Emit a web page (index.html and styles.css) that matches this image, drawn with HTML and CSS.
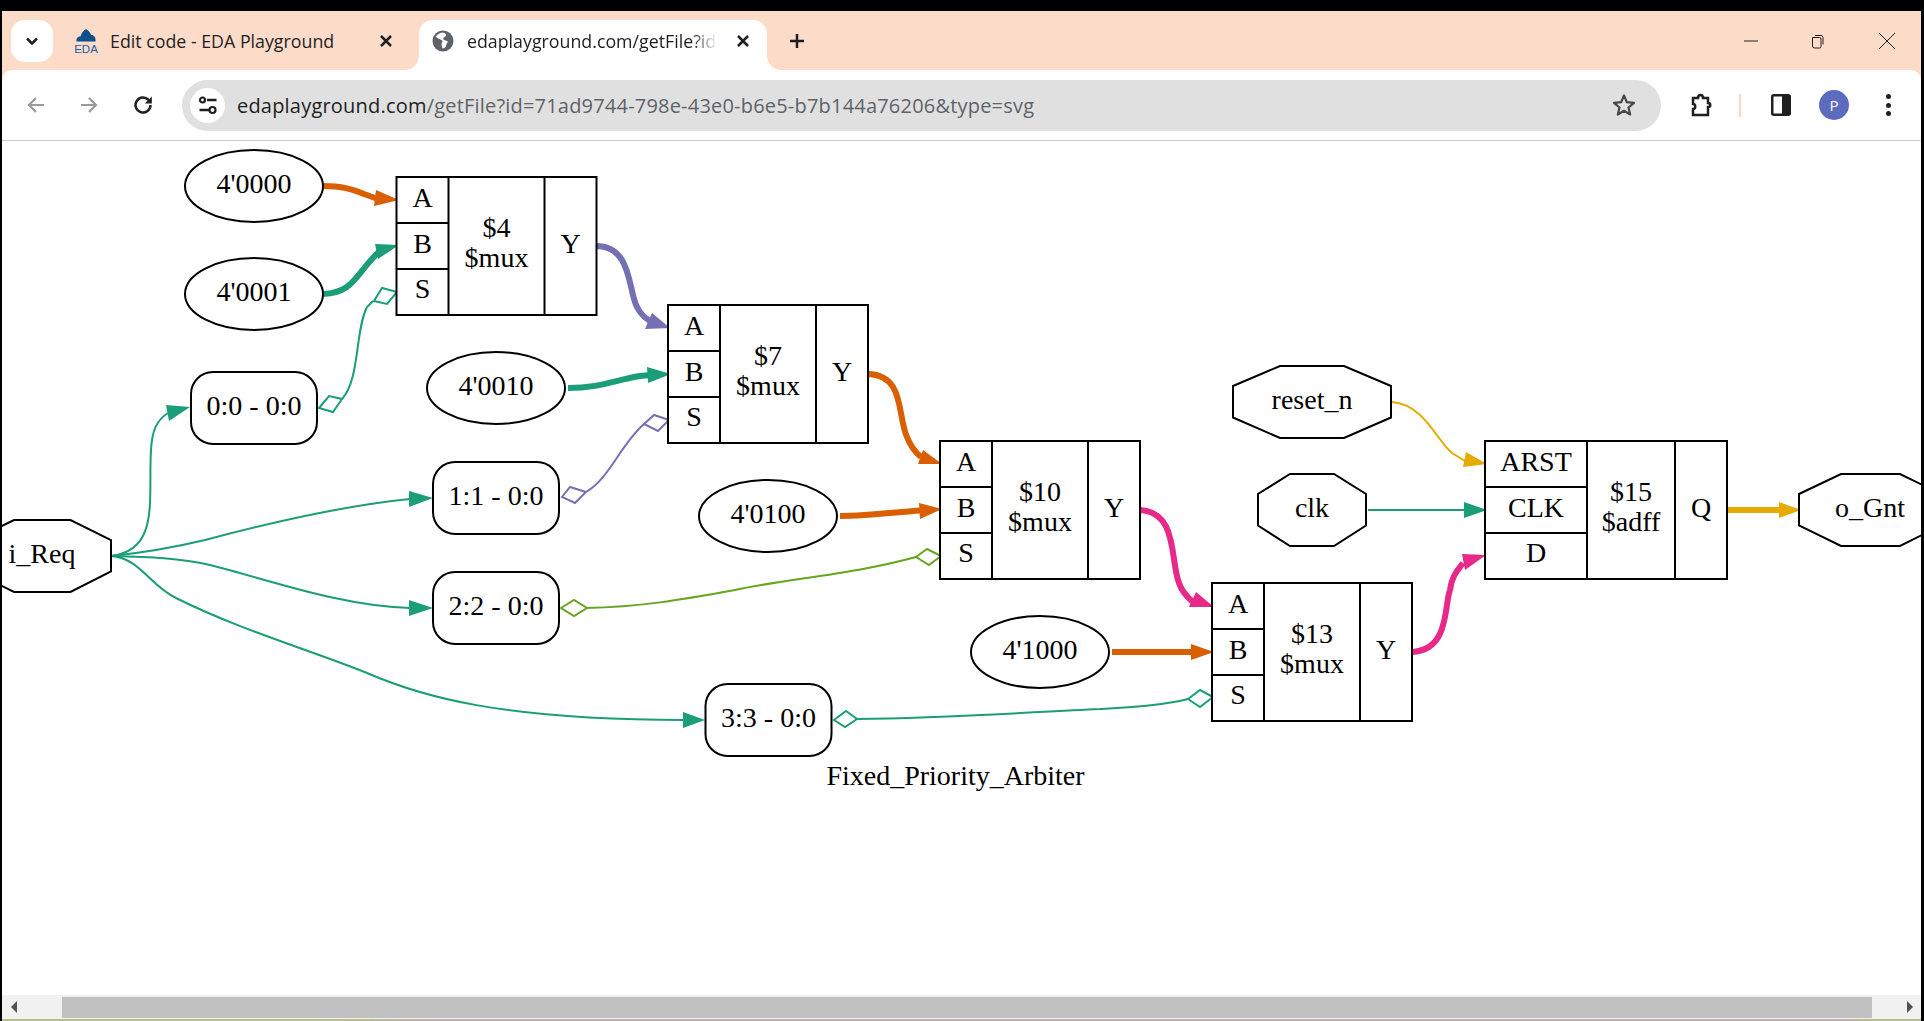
FILE: index.html
```html
<!DOCTYPE html>
<html lang="en">
<head>
<meta charset="utf-8">
<title>edaplayground.com/getFile</title>
<link rel="stylesheet" href="styles.css">
</head>
<body>
<div class="window">
  <div class="tabstrip">
    <button class="tab-search"><svg class="ico" width="16" height="16" viewBox="0 0 16 16"><path class="s-dark" d="M3 5.500 8 10.500 13 5.500"/></svg></button>
    <div class="tab tab-idle">
      <svg class="favicon" width="26" height="26" viewBox="0 0 26 26"><path class="f-blue" d="M3.500 13.500C3 10 5 8.500 7.500 8.500 8.500 5 10.500 2.500 13 1c2.500 1.500 4.500 3.500 5 6 3-.2 5 2.500 4.500 6.500z"/><text class="eda" x="13" y="24.500">EDA</text></svg>
      <span class="tab-title">Edit code - EDA Playground</span>
      <svg class="tab-x" width="14" height="14" viewBox="0 0 14 14"><path class="s-dark" d="M2 2 12 12M12 2 2 12"/></svg>
    </div>
    <div class="tab tab-active">
      <svg class="globe" width="22" height="22" viewBox="0 0 22 22"><circle class="f-grey" cx="11" cy="11" r="10.500"/><path class="f-white" d="M10 2.500c-2 .5-5 2-6 4 1 2 3 2.500 4.500 3 1 .5 2 .5 2 2 0 1-1 1.500-1 3l1 4c1.500 0 3-1 3.500-2.500 0-2 1.500-3 2-4.500-1.500-1-3.500-1-4.500-2-.5-1-.5-1.500 1-2.500 1-.5 2-1.500 1.500-3-1-.5-2.500-1.500-4-1.500z"/></svg>
      <span class="tab-title tab-fade">edaplayground.com/getFile?id</span>
      <svg class="tab-x" width="14" height="14" viewBox="0 0 14 14"><path class="s-dark" d="M2 2 12 12M12 2 2 12"/></svg>
    </div>
    <svg class="newtab" width="18" height="18" viewBox="0 0 18 18"><path class="s-dark" d="M9 2V16M2 9H16"/></svg>
    <div class="winctl">
      <svg class="win-min" width="16" height="16" viewBox="0 0 16 16"><path class="s-thin" d="M1 8H15"/></svg>
      <svg width="16" height="16" viewBox="0 0 16 16"><path class="s-thin" d="M3.500 4.500h7a1.500 1.500 0 0 1 1.500 1.500v7.500a1.500 1.500 0 0 1-1.500 1.500h-5a2 2 0 0 1-2-2zM6 2.500h6a2 2 0 0 1 2 2v7"/></svg>
      <svg width="18" height="18" viewBox="0 0 18 18"><path class="s-thin" d="M1 1 17 17M17 1 1 17"/></svg>
    </div>
  </div>
  <div class="toolbar">
    <svg class="nav" width="20" height="20" viewBox="0 0 20 20"><path class="s-muted" d="M18 10H3M10 3 3 10 10 17"/></svg>
    <svg class="nav" width="20" height="20" viewBox="0 0 20 20"><path class="s-muted" d="M2 10H17M10 3 17 10 10 17"/></svg>
    <svg class="nav" width="22" height="22" viewBox="0 0 22 22"><path class="s-dark" d="M18.500 11a7.500 7.500 0 1 1-2.200-5.300L18.500 8"/><path class="f-dark" d="M19.800 2.500v7h-7z"/></svg>
    <div class="omnibox">
      <span class="site-btn"><svg width="20" height="20" viewBox="0 0 20 20"><path class="s-dark" d="M12.500 15H1.500M9 5H18.500"/><circle class="ring" cx="14.500" cy="15" r="3"/><circle class="ring" cx="4.500" cy="5" r="2.500"/></svg></span>
      <span class="url"><span class="url-host">edaplayground.com</span>/getFile?id=71ad9744-798e-43e0-b6e5-b7b144a76206&amp;type=svg</span>
      <svg class="star" width="24" height="24" viewBox="0 0 24 24"><path class="s-star" d="M12 2.500 14.800 9.200 22 9.800 16.500 14.500 18.200 21.500 12 17.800 5.800 21.500 7.500 14.500 2 9.800 9.200 9.200z"/></svg>
    </div>
    <svg class="ext" width="26" height="26" viewBox="0 0 26 26"><path class="s-dark" d="M5 6h5c0-4 5-4 5 0h5v5c3 0 3 4 0 4v8H5v-6c3 0 3-5 0-5z"/></svg>
    <span class="tb-sep"></span>
    <svg class="panel" width="20" height="22" viewBox="0 0 20 22"><rect class="s-dark" x="1.250" y="1.250" width="17.500" height="19.500" rx="1.500"/><rect class="f-dark" x="11" y="1" width="8" height="20"/></svg>
    <span class="avatar">P</span>
    <span class="menu"><i></i><i></i><i></i></span>
  </div>
  <div class="page">
    <svg class="graph" width="1919" height="854" viewBox="2 141 1919 854">
      <!-- edges -->
      <g class="edge w orange">
        <path d="M323,186 C342,186 352,189 364,194 L378,199"/><polygon points="399,200 374,206 376,190"/>
      </g>
      <g class="edge w green">
        <path d="M323,294 C355,293 356,272 380,251"/><polygon points="399,245 378,259 375,244"/>
        <path d="M568,388 C600,388 615,380 640,376 L650,375"/><polygon points="671,374 648,383 647,367"/>
      </g>
      <g class="edge w purple">
        <path d="M596,246 C632,246 628,290 637,307 C640,313 645,318 650,321"/><polygon points="670,328 645,329 652,313"/>
      </g>
      <g class="edge w orange">
        <path d="M868,374 C905,375 897,415 907,437 C910,445 915,452 921,457"/><polygon points="942,464 918,464 923,450"/>
        <path d="M840,516 C865,516 890,513 920,510.500"/><polygon points="942,509 920,519 919,503"/>
        <path d="M1112,652 H1192"/><polygon points="1214,652 1191,660 1191,644"/>
      </g>
      <g class="edge w pink">
        <path d="M1140,510 C1178,512 1170,560 1179,583 C1182,592 1188,598 1194,603"/><polygon points="1214,607 1189,607 1196,592"/>
        <path d="M1412,652 C1450,650 1444,605 1450,590 C1452,575 1458,570 1463,563"/><polygon points="1486,555 1465,570 1462,554"/>
      </g>
      <g class="edge w amber">
        <path d="M1728,510 H1780"/><polygon points="1801,510 1779,518 1779,502"/>
      </g>
      <g class="edge t green">
        <path d="M111,556 C160,550 148,500 151,450 C152,430 157,420 168,413"/><polygon points="190,407 169,421 166,405"/>
        <path d="M111,556 C150,552 180,546 205,540 C280,520 350,505 410,499"/><polygon points="433,498 409,507 409,491"/>
        <path d="M111,556 C150,557 180,558 210,565 C270,580 340,606 410,608"/><polygon points="433,608 409,616 409,600"/>
        <path d="M111,556 C140,558 150,586 176,598 C240,630 310,650 367,673 C420,696 500,720 684,720"/><polygon points="705,720 683,728 683,712"/>
        <path d="M1368,510 H1465"/><polygon points="1487,510 1464,518 1464,502"/>
        <path d="M342,399 C360,380 355,330 367,307 L373,301"/><polygon class="open" points="319,408 329,396 342,399 333,412"/><polygon class="open" points="374,301 382,288 397,292 387,304"/>
        <path d="M857,719 C950,718 1030,712 1100,709 C1130,707 1160,706 1188,699"/><polygon class="open" points="834,720 846,711 857,719 845,727"/><polygon class="open" points="1188,699 1200,690 1213,697 1200,707"/>
      </g>
      <g class="edge t purple">
        <path d="M586,492 C610,478 620,445 644,424"/><polygon class="open" points="562,497 570,487 586,492 575,503"/><polygon class="open" points="644,424 654,415 669,420 658,431"/>
      </g>
      <g class="edge t lime">
        <path d="M586,608 C640,607 680,600 735,590 C790,578 850,575 916,557"/><polygon class="open" points="561,608 574,600 587,608 574,616"/><polygon class="open" points="916,557 927,549 941,556 929,565"/>
      </g>
      <g class="edge t amber">
        <path d="M1392,402 C1425,405 1436,440 1452,453 L1465,461"/><polygon points="1487,464 1463,467 1466,452"/>
      </g>

      <!-- constants -->
      <g transform="translate(254 186)"><ellipse class="shape" rx="69" ry="36"/><text class="lbl" y="7">4'0000</text></g>
      <g transform="translate(254 294)"><ellipse class="shape" rx="69" ry="36"/><text class="lbl" y="7">4'0001</text></g>
      <g transform="translate(496 388)"><ellipse class="shape" rx="69" ry="36"/><text class="lbl" y="6.500">4'0010</text></g>
      <g transform="translate(768 516)"><ellipse class="shape" rx="69" ry="36"/><text class="lbl" y="6.500">4'0100</text></g>
      <g transform="translate(1040 652)"><ellipse class="shape" rx="69" ry="36"/><text class="lbl" y="6.500">4'1000</text></g>

      <!-- bit slices -->
      <g transform="translate(254 408)"><rect class="shape" x="-63" y="-36" width="126" height="72" rx="22"/><text class="lbl" y="6.500">0:0 - 0:0</text></g>
      <g transform="translate(496 498)"><rect class="shape" x="-63" y="-36" width="126" height="72" rx="22"/><text class="lbl" y="6.500">1:1 - 0:0</text></g>
      <g transform="translate(496 608)"><rect class="shape" x="-63" y="-36" width="126" height="72" rx="22"/><text class="lbl" y="6.500">2:2 - 0:0</text></g>
      <g transform="translate(768.500 720)"><rect class="shape" x="-63" y="-36" width="126" height="72" rx="22"/><text class="lbl" y="6.500">3:3 - 0:0</text></g>

      <!-- ports -->
      <g transform="translate(42 556)"><polygon class="shape" points="69,-16 69,15.500 28.500,36 -28,36 -69,15.500 -69,-16 -28,-36 28.500,-36"/><text class="lbl" y="6.500">i_Req</text></g>
      <g transform="translate(1312 402)"><polygon class="shape" points="79,-16 79,15.500 32,36 -32,36 -79,15.500 -79,-16 -32,-36 32,-36"/><text class="lbl" y="6.500">reset_n</text></g>
      <g transform="translate(1312 510)"><polygon class="shape" points="54,-16 54,15.500 22,36 -22,36 -54,15.500 -54,-16 -22,-36 22,-36"/><text class="lbl" y="6.500">clk</text></g>
      <g transform="translate(1870 510)"><polygon class="shape" points="71,-16 71,15.500 30,36 -29,36 -71,15.500 -71,-16 -29,-36 30,-36"/><text class="lbl" y="6.500">o_Gnt</text></g>

      <!-- muxes -->
      <g transform="translate(396.500 177)">
        <rect class="shape" width="200" height="138"/><path class="shape" d="M52,0V138M148,0V138M0,46H52M0,92H52"/>
        <text class="lbl" x="26" y="30">A</text><text class="lbl" x="26" y="76">B</text><text class="lbl" x="26" y="121">S</text>
        <text class="lbl" x="100" y="60">$4</text><text class="lbl" x="100" y="90">$mux</text><text class="lbl" x="174" y="76">Y</text>
      </g>
      <g transform="translate(668 305)">
        <rect class="shape" width="200" height="138"/><path class="shape" d="M52,0V138M148,0V138M0,46H52M0,92H52"/>
        <text class="lbl" x="26" y="30">A</text><text class="lbl" x="26" y="76">B</text><text class="lbl" x="26" y="121">S</text>
        <text class="lbl" x="100" y="60">$7</text><text class="lbl" x="100" y="90">$mux</text><text class="lbl" x="174" y="76">Y</text>
      </g>
      <g transform="translate(940 441)">
        <rect class="shape" width="200" height="138"/><path class="shape" d="M52,0V138M148,0V138M0,46H52M0,92H52"/>
        <text class="lbl" x="26" y="30">A</text><text class="lbl" x="26" y="76">B</text><text class="lbl" x="26" y="121">S</text>
        <text class="lbl" x="100" y="60">$10</text><text class="lbl" x="100" y="90">$mux</text><text class="lbl" x="174" y="76">Y</text>
      </g>
      <g transform="translate(1212 583)">
        <rect class="shape" width="200" height="138"/><path class="shape" d="M52,0V138M148,0V138M0,46H52M0,92H52"/>
        <text class="lbl" x="26" y="30">A</text><text class="lbl" x="26" y="76">B</text><text class="lbl" x="26" y="121">S</text>
        <text class="lbl" x="100" y="60">$13</text><text class="lbl" x="100" y="90">$mux</text><text class="lbl" x="174" y="76">Y</text>
      </g>
      <g transform="translate(1485 441)">
        <rect class="shape" width="242" height="138"/><path class="shape" d="M102,0V138M190,0V138M0,46H102M0,92H102"/>
        <text class="lbl" x="51" y="30">ARST</text><text class="lbl" x="51" y="76">CLK</text><text class="lbl" x="51" y="121">D</text>
        <text class="lbl" x="146" y="60">$15</text><text class="lbl" x="146" y="90">$adff</text><text class="lbl" x="216" y="76">Q</text>
      </g>

      <text class="lbl" x="955.500" y="785">Fixed_Priority_Arbiter</text>
    </svg>
  </div>
  <div class="hscroll">
    <span class="arrow arrow-l"></span>
    <span class="thumb"></span>
    <span class="arrow arrow-r"></span>
  </div>
  <div class="wallpaper"></div>
</div>
</body>
</html>
```
FILE: styles.css
```css
* { box-sizing: border-box; }
html, body { margin: 0; padding: 0; height: 100%; background: #000; overflow: hidden; }
body { padding: 11px 3px 0 2px; }
.window { height: 1010px; display: flex; flex-direction: column; background: #fddbc9; font-family: "Open Sans", "Noto Sans", sans-serif; color: #1f1f1f; }

/* shared icon strokes */
svg { display: block; flex: none; }
.s-dark { fill: none; stroke: #1f1f1f; stroke-width: 2.5; }
.s-muted { fill: none; stroke: #9a9a9a; stroke-width: 2.2; }
.s-thin { fill: none; stroke: #1f1f1f; stroke-width: 1; }
.s-star { fill: none; stroke: #474747; stroke-width: 2.2; stroke-linejoin: round; }
.f-dark { fill: #1f1f1f; }
.f-grey { fill: #5f6368; }
.f-white { fill: #fff; }
.f-blue { fill: #0b4f8f; }
.ring { fill: #fff; stroke: #1f1f1f; stroke-width: 2.2; }
.eda { font: 11.500px "Liberation Sans", sans-serif; fill: #1b5ea6; text-anchor: middle; }

/* tab strip */
.tabstrip { height: 59px; flex: none; display: flex; align-items: flex-start; padding: 9px 0 0 9px; }
.tab-search { width: 42px; height: 42px; border: 0; border-radius: 14px; background: #fff; display: flex; align-items: center; justify-content: center; padding: 0; }
.tab { height: 50px; display: flex; align-items: center; position: relative; }
.tab-idle { width: 366px; padding: 0 0 8px 20px; }
.favicon { margin-right: 11px; }
.tab-title { font-size: 17.800px; white-space: nowrap; overflow: hidden; }
.tab-idle .tab-title { width: 269px; }
.tab-active { width: 348px; padding: 0 0 8px 13px; background: #fff; border-radius: 14px 14px 0 0; }
.tab-active::before, .tab-active::after { content: ""; position: absolute; bottom: 0; width: 14px; height: 14px; }
.tab-active::before { left: -14px; background: radial-gradient(circle at 0 0, transparent 13.500px, #fff 14px); }
.tab-active::after { right: -14px; background: radial-gradient(circle at 100% 0, transparent 13.500px, #fff 14px); }
.globe { margin-right: 13px; }
.tab-fade { width: 250px; -webkit-mask-image: linear-gradient(90deg, #000 90%, transparent 100%); mask-image: linear-gradient(90deg, #000 90%, transparent 100%); }
.tab-active .tab-x { margin-left: 19px; }
.newtab { margin: 12px 0 0 21px; }
.winctl { margin-left: auto; display: flex; align-items: center; height: 42px; gap: 53px; padding-right: 25px; }
.win-min { margin-right: -3px; }

/* toolbar */
.toolbar { height: 70px; flex: none; background: #fff; border-radius: 10px 10px 0 0; display: flex; align-items: center; padding: 0 21px 0 24px; }
.nav + .nav { margin-left: 33px; }
.nav:nth-child(3) { margin-left: 33px; }
.omnibox { width: 1479px; height: 51px; margin-left: 28px; border-radius: 26px; background: #e0e0e0; display: flex; align-items: center; padding: 0 25px 0 8px; }
.site-btn { width: 35px; height: 35px; border-radius: 50%; background: #fff; display: flex; align-items: center; justify-content: center; flex: none; }
.url { margin-left: 12px; font-size: 20px; letter-spacing: .2px; color: #5f6368; white-space: nowrap; flex: 1; }
.url-host { color: #1f1f1f; }
.ext { margin-left: 27px; }
.tb-sep { width: 2px; height: 23px; background: #fbd5c4; margin-left: 25px; }
.panel { margin-left: 30px; }
.avatar { width: 30px; height: 30px; margin-left: 28px; border-radius: 50%; background: #5c6bc0; color: #fff; font-size: 15px; display: flex; align-items: center; justify-content: center; flex: none; }
.menu { margin-left: 37px; display: flex; flex-direction: column; gap: 3.500px; }
.menu i { width: 5px; height: 5px; border-radius: 50%; background: #1f1f1f; display: block; }

/* page */
.page { flex: 1; min-height: 0; background: #fff; border-top: 1px solid #ccc; overflow: hidden; }
.shape { fill: #fff; stroke: #000; stroke-width: 2; }
path.shape { fill: none; }
.lbl { font-family: "Liberation Serif", "Times New Roman", serif; font-size: 28px; fill: #000; text-anchor: middle; }
.edge path { fill: none; }
.edge.w path { stroke-width: 6; }
.edge.t path { stroke-width: 2; }
.green path, .green .open { stroke: #1b9e77; } .green polygon { fill: #1b9e77; }
.orange path { stroke: #d95f02; } .orange polygon { fill: #d95f02; }
.purple path, .purple .open { stroke: #7570b3; } .purple polygon { fill: #7570b3; }
.pink path { stroke: #e7298a; } .pink polygon { fill: #e7298a; }
.amber path { stroke: #e6ab02; } .amber polygon { fill: #e6ab02; }
.lime path, .lime .open { stroke: #66a61e; } .lime polygon { fill: #66a61e; }
.edge .open { fill: #fff; stroke-width: 2; }

/* scrollbar */
.hscroll { height: 24px; flex: none; background: #f1f1f1; display: flex; align-items: center; padding: 2px 0 1px; position: relative; }
.thumb { height: 21px; width: 1810px; margin-left: 60px; background: #c0c0c0; }
.arrow { position: absolute; top: 6px; width: 0; height: 0; border-top: 6px solid transparent; border-bottom: 6px solid transparent; }
.arrow-l { left: 9px; border-right: 6px solid #505050; }
.arrow-r { right: 8px; border-left: 6px solid #505050; }
.wallpaper { height: 2px; flex: none; background: linear-gradient(90deg, #b8bd8c 0, #b8bd8c 320px, #bcaeaa 440px, #bcaeaa 1845px, #b8bd8c 1870px); }
```
